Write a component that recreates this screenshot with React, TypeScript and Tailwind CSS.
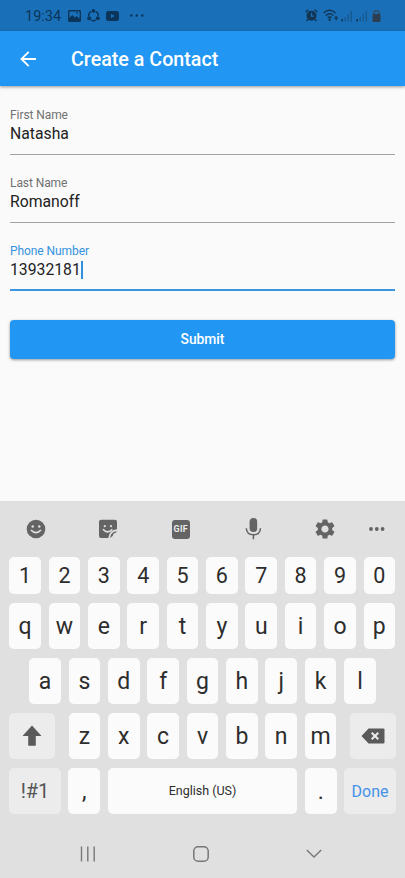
import type { ReactNode } from "react";

function Key({ children, className = "" }: { children: ReactNode; className?: string }) {
  return (
    <div
      className={`flex h-full items-center justify-center rounded-[5px] text-[#2d2d2d] ${className}`}
    >
      {children}
    </div>
  );
}

function LetterKey({ label }: { label: string }) {
  return (
    <Key className="w-[31.6px] bg-[#fbfbfb] pt-[1px] text-[23px] leading-none">
      <span>{label}</span>
    </Key>
  );
}

function Field({ label, value, active = false }: { label: string; value: string; active?: boolean }) {
  return (
    <div
      className={`box-content flex flex-col ${
        active ? "h-[45px] border-b-2 border-[#3b94dd]" : "h-[46px] border-b border-[#a3a3a3]"
      }`}
    >
      <span
        className={`text-[12px] leading-[14px] tracking-[-0.08px] ${active ? "text-[#3593dd]" : "text-[#717171]"}`}
      >
        {label}
      </span>
      <div className="mt-[1px] flex h-[21px] items-center">
        <span className="text-[15.76px] leading-[21px] text-[#222]">{value}</span>
        {active && <span className="h-[18px] w-[2px] bg-[#2f8fe0]" />}
      </div>
    </div>
  );
}

function StatusBar() {
  return (
    <div className="flex h-[31px] items-center bg-[#1a70b8] pl-[25px] text-[#0b355a]">
      <span className="w-[43px] pt-[3px] text-[14.5px] leading-none">19:34</span>
      <svg width="13" height="12" viewBox="0 0 13 12" fill="currentColor">
        <path
          fillRule="evenodd"
          d="M1.4 0h10.2Q13 0 13 1.4v9.2q0 1.4-1.4 1.4H1.4Q0 12 0 10.600V1.400Q0 0 1.400 0ZM1.400 1.400v6.300L4.300 5l2.500 2.500 1.800-1.500 3 2.500V1.400ZM8.200 2.300h1.500v1.500H8.200Z"
        />
      </svg>
      <svg className="ml-[6px]" width="13" height="13" viewBox="0 0 13 13" fill="none" stroke="currentColor" strokeWidth="1.4">
        <path d="M4.300 2.400Q1.600 3.700 1.600 7M8.700 2.400Q11.400 3.700 11.400 7M4.200 11.200Q6.500 12.200 8.800 11.200" />
        <g fill="currentColor" stroke="none">
          <circle cx="6.500" cy="1.900" r="1.800" />
          <circle cx="2.200" cy="9.300" r="2" />
          <circle cx="10.800" cy="9.300" r="2" />
        </g>
      </svg>
      <svg className="ml-[6px]" width="13" height="10" viewBox="0 0 13 10" fill="currentColor">
        <path fillRule="evenodd" d="M2.500 0h8Q13 0 13 2.500v5Q13 10 10.500 10h-8Q0 10 0 7.500v-5Q0 0 2.500 0ZM5 2.900v4.200L8.700 5Z" />
      </svg>
      <svg className="ml-[11px]" width="14" height="4" viewBox="0 0 14 4" fill="currentColor">
        <circle cx="1.300" cy="1.500" r="1.200" />
        <circle cx="6.800" cy="1.500" r="1.200" />
        <circle cx="12.300" cy="1.500" r="1.200" />
      </svg>
      <div className="ml-auto mr-[24px] flex items-center text-[#123553]">
        <svg width="13" height="13" viewBox="0 0 13 13">
          <circle cx="6.500" cy="6.800" r="5" fill="currentColor" />
          <path d="M.700 3 3.300.900M12.300 3 9.700.900M2.700 10.500 1.500 12M10.300 10.500 11.500 12" stroke="currentColor" strokeWidth="1.500" />
          <path d="M6.500 3.800v3.400h2.500" fill="none" stroke="#1a70b8" strokeWidth="1.200" />
        </svg>
        <svg className="ml-[5px]" width="16" height="13" viewBox="0 0 16 13" fill="none" stroke="currentColor" strokeWidth="1.400">
          <path d="M.600 4Q6.500-1.400 12.600 4M2.700 6.500q4-3.400 7.800 0M4.600 8.800q2-1.500 4 0" />
          <circle cx="6.600" cy="10.800" r="1.200" fill="currentColor" stroke="none" />
          <path d="m13.200 6.500 1.900 2.200h-3.800ZM11.300 9.200h3.800l-1.900 2.200Z" fill="currentColor" stroke="none" />
        </svg>
        <svg className="ml-[2px]" width="12" height="12" viewBox="0 0 12 12" stroke="currentColor">
          <path d="M1.200 9v2.500" strokeWidth="1.600" />
          <path d="M4.200 7v4.500M7.200 4v7.500M10.300 1v10.500" strokeOpacity=".450" strokeWidth="1.200" />
        </svg>
        <svg className="ml-[3px]" width="12" height="12" viewBox="0 0 12 12" stroke="currentColor">
          <path d="M1.200 9v2.500" strokeWidth="1.600" />
          <path d="M4.200 7v4.500M7.200 4v7.500M10.300 1v10.500" strokeOpacity=".450" strokeWidth="1.200" />
        </svg>
        <svg className="ml-[4px]" width="9" height="12" viewBox="0 0 9 12">
          <path d="M2 5V3Q2 .800 4.500.800T7 3v2" fill="none" stroke="#344d62" strokeWidth="1.500" />
          <rect x=".500" y="4" width="8" height="8" rx="1" fill="#2c3e4f" />
        </svg>
      </div>
    </div>
  );
}

function Toolbar() {
  return (
    <div className="flex h-[56px] items-center pl-[26px] text-[#646464]">
      <svg width="20" height="20" viewBox="0 0 20 20">
        <circle cx="10" cy="10" r="9.300" fill="currentColor" />
        <circle cx="6.700" cy="7.500" r="1.200" fill="#e0e0e0" />
        <circle cx="13.300" cy="7.500" r="1.200" fill="#e0e0e0" />
        <path d="M5 11q4.800 5.300 10 0" fill="none" stroke="#e0e0e0" strokeWidth="1.700" />
      </svg>
      <svg className="ml-[52px]" width="20" height="20" viewBox="0 0 20 20">
        <path d="M3 .800h14q2 0 2 2v7.400q-7.700.300-8.700 8.900H3q-2 0-2-2V2.800q0-2 2-2Z" fill="currentColor" />
        <path d="M12.200 19q.300-6.300 6.800-6.700-1 1.700-3.300 2.200-.500 3-3.500 4.500Z" fill="currentColor" />
        <circle cx="6.800" cy="7.200" r="1.100" fill="#e0e0e0" />
        <circle cx="13" cy="7.200" r="1.100" fill="#e0e0e0" />
        <path d="M5 10.200q4.500 5.300 9.400 0" fill="none" stroke="#e0e0e0" strokeWidth="1.600" />
      </svg>
      <div className="ml-[53.500px] flex h-[18.500px] w-[18.500px] items-center justify-center rounded-[3px] bg-[#646464] text-[8.800px] font-bold leading-none tracking-[.3px] text-[#ececec]">
        GIF
      </div>
      <svg className="ml-[54.500px]" width="17" height="22" viewBox="0 0 17 22">
        <rect x="4.600" y="0" width="7.600" height="14" rx="3.800" fill="currentColor" />
        <path d="M1.300 10.200q.500 6.600 7.100 6.600t7.100-6.600M8.400 16.800v4.500" fill="none" stroke="currentColor" strokeWidth="1.500" />
      </svg>
      <svg className="ml-[51.500px]" width="24" height="24" viewBox="0 0 24 24" fill="currentColor">
        <path d="M19.140 12.940c.040-.300.060-.610.060-.940 0-.320-.020-.640-.070-.940l2.030-1.580a.490.490 0 0 0 .120-.610l-1.920-3.320a.488.488 0 0 0-.590-.220l-2.390.960c-.500-.380-1.030-.700-1.620-.940l-.360-2.540a.484.484 0 0 0-.480-.410h-3.840c-.240 0-.430.170-.470.410l-.360 2.540c-.590.240-1.130.570-1.620.940l-2.390-.960c-.220-.080-.470 0-.590.220L2.740 8.870c-.120.210-.080.470.120.610l2.030 1.580c-.050.300-.090.630-.090.940s.020.640.070.940l-2.030 1.580a.490.490 0 0 0-.120.610l1.920 3.320c.120.220.370.290.590.220l2.390-.960c.500.380 1.030.700 1.620.940l.360 2.540c.050.240.240.410.480.410h3.840c.240 0 .440-.170.470-.410l.360-2.540c.590-.240 1.130-.560 1.620-.940l2.390.960c.220.080.470 0 .590-.220l1.920-3.320c.120-.220.070-.470-.120-.610l-2.010-1.580zM12 15.600c-1.980 0-3.600-1.620-3.600-3.600s1.620-3.600 3.600-3.600 3.600 1.620 3.600 3.600-1.620 3.600-3.600 3.600z" />
      </svg>
      <svg className="ml-[31.500px]" width="16" height="4" viewBox="0 0 16 4" fill="currentColor">
        <circle cx="2" cy="2" r="1.900" />
        <circle cx="7.800" cy="2" r="1.900" />
        <circle cx="13.600" cy="2" r="1.900" />
      </svg>
    </div>
  );
}

function Keyboard() {
  return (
    <div className="flex h-[376.600px] shrink-0 flex-col bg-[#e0e0e0]">
      <Toolbar />
      <div className="flex flex-col gap-[8.700px] px-[9.300px]">
        <div className="flex h-[36.500px] gap-[7.780px]">
          {[..."1234567890"].map((d) => (
            <Key key={d} className="w-[31.600px] bg-[#fbfbfb] pt-[1px] text-[21.500px] leading-none">
              {d}
            </Key>
          ))}
        </div>
        <div className="flex h-[46.300px] gap-[7.780px]">
          {[..."qwertyuiop"].map((c) => (
            <LetterKey key={c} label={c} />
          ))}
        </div>
        <div className="flex h-[46.300px] justify-center gap-[7.780px]">
          {[..."asdfghjkl"].map((c) => (
            <LetterKey key={c} label={c} />
          ))}
        </div>
        <div className="flex h-[46.300px] justify-between">
          <Key className="w-[45.600px] bg-[#ececec]">
            <svg width="20" height="21" viewBox="0 0 20 21" fill="#5a5a5a">
              <path d="M10 .500 19.500 11h-5.700v9.300q0 .500-.500.500H6.700q-.500 0-.500-.500V11H.500Z" />
            </svg>
          </Key>
          <div className="flex gap-[7.780px]">
            {[..."zxcvbnm"].map((c) => (
              <LetterKey key={c} label={c} />
            ))}
          </div>
          <Key className="w-[45.600px] bg-[#ececec]">
            <svg width="24" height="16" viewBox="0 0 24 16">
              <path d="M7.500.500h15q1 0 1 1v13q0 1-1 1h-15L.500 8Z" fill="#5a5a5a" />
              <path d="m10.700 4.700 6.600 6.600m0-6.600-6.600 6.600" stroke="#ececec" strokeWidth="2" />
            </svg>
          </Key>
        </div>
        <div className="flex h-[46.300px] gap-[7.780px]">
          <Key className="w-[51.400px] bg-[#ececec] pt-[1px] text-[20px]">
            <span className="text-[#555]">!#1</span>
          </Key>
          <LetterKey label="," />
          <Key className="flex-1 bg-[#fbfbfb] pt-[2px] text-[12.500px]">English (US)</Key>
          <LetterKey label="." />
          <Key className="w-[51.400px] bg-[#ececec] pt-[2px] text-[16px]">
            <span className="text-[#4592e8]">Done</span>
          </Key>
        </div>
      </div>
      <div className="flex flex-1 items-center pt-[16px] pl-[80px] text-[#777]">
        <svg width="16" height="16" viewBox="0 0 16 16" stroke="currentColor" strokeWidth="1.400">
          <path d="M1.500.500v15M7.800.500v15M14.200.500v15" />
        </svg>
        <svg className="ml-[97px]" width="16" height="16" viewBox="0 0 16 16" fill="none" stroke="currentColor" strokeWidth="1.500">
          <rect x=".800" y=".800" width="14.400" height="14.400" rx="4.300" />
        </svg>
        <svg className="ml-[97px]" width="16" height="10" viewBox="0 0 16 10" fill="none" stroke="currentColor" strokeWidth="1.400">
          <path d="m.800 1 7.200 7 7.200-7" />
        </svg>
      </div>
    </div>
  );
}

export default function App() {
  return (
    <div className="flex h-[878px] w-[405px] flex-col overflow-hidden bg-[#fafafa] font-[Roboto,sans-serif]">
      <StatusBar />
      <header className="flex h-[55px] shrink-0 items-center bg-[#2196f3] pl-[20px] text-white shadow-[0_1px_3px_rgba(0,0,0,0.400)]">
        <svg width="16" height="16" viewBox="0 0 16 16" fill="none" stroke="currentColor" strokeWidth="1.900">
          <path d="M8.700.800 1.500 8l7.200 7.200M1.500 8H16" />
        </svg>
        <h1 className="ml-[35px] pt-[2px] text-[19.700px] font-medium leading-none">Create a Contact</h1>
      </header>
      <main className="flex flex-1 flex-col px-[10px] pt-[22px]">
        <div className="flex flex-col gap-[21px]">
          <Field label="First Name" value="Natasha" />
          <Field label="Last Name" value="Romanoff" />
          <Field label="Phone Number" value="13932181" active />
        </div>
        <button className="mt-[29px] h-[39px] rounded-[4px] bg-[#2196f3] text-[13.800px] font-medium text-white shadow-[0_1px_3px_rgba(0,0,0,0.400)]">
          Submit
        </button>
      </main>
      <Keyboard />
    </div>
  );
}
